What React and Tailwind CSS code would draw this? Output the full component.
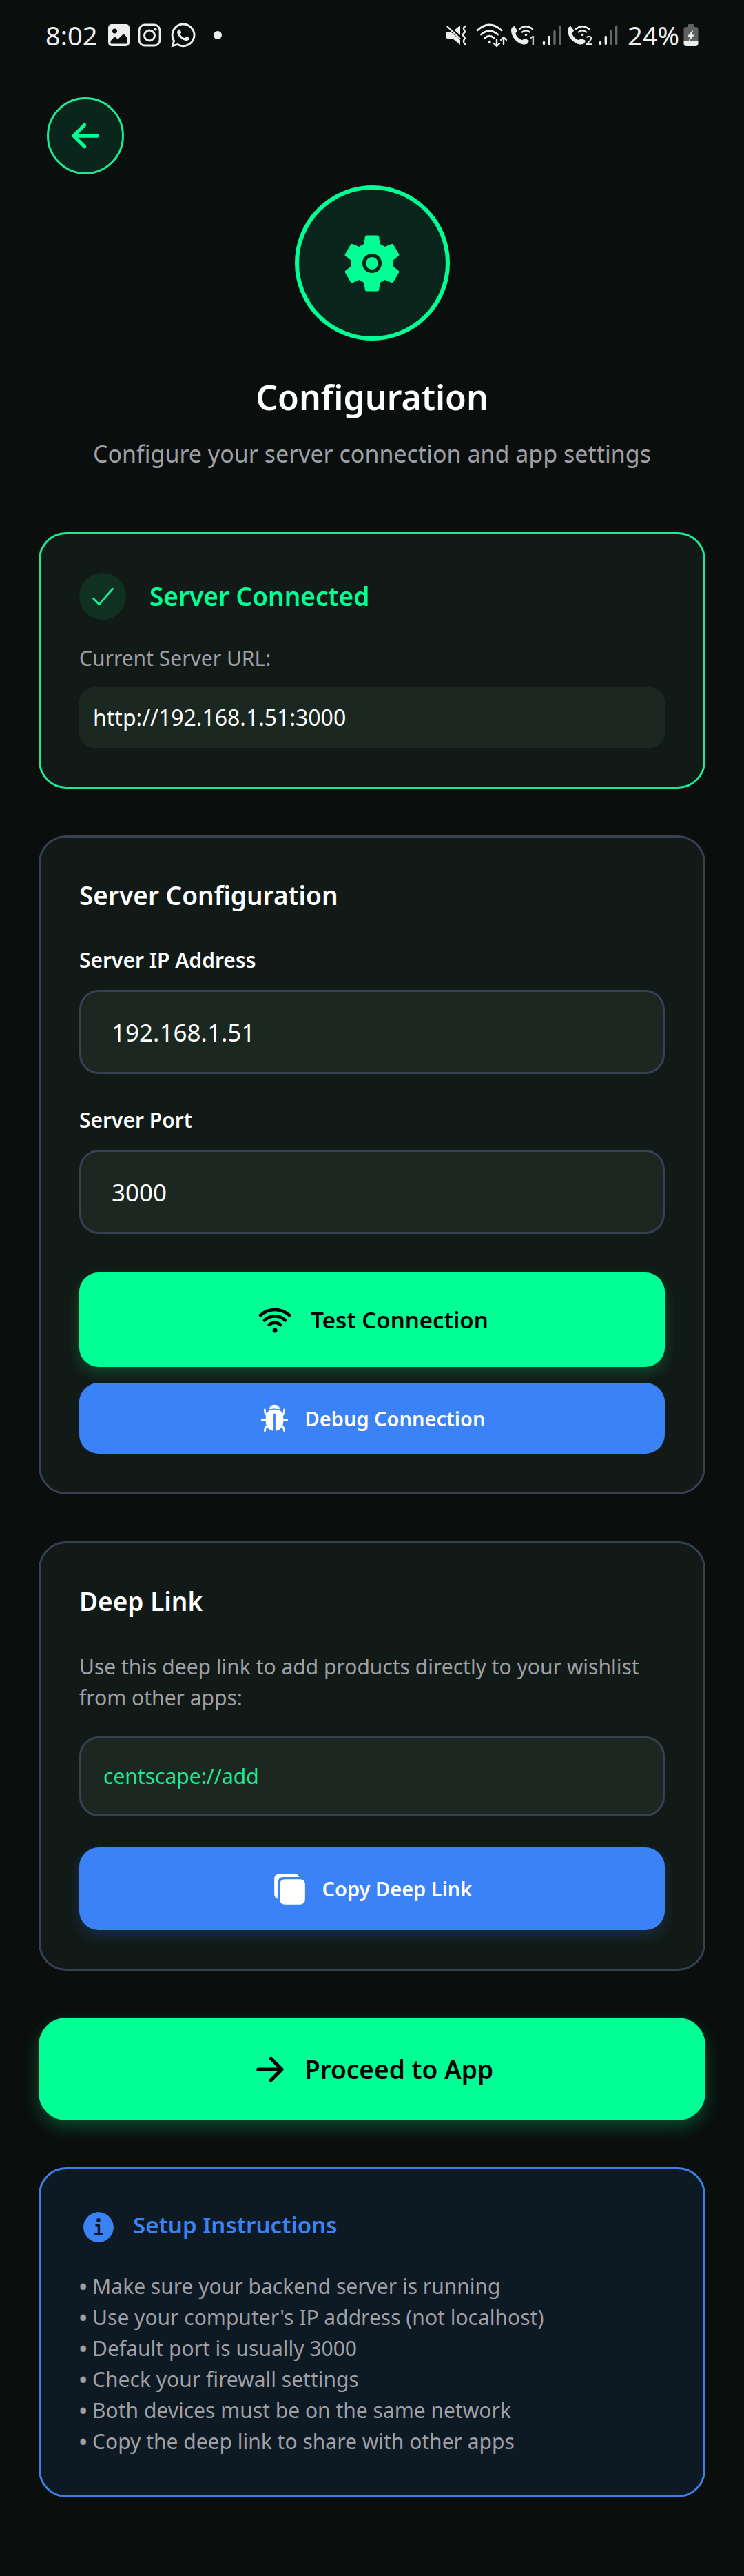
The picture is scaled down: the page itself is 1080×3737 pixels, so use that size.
import React, { useState } from "react";
import {
  IoArrowBack,
  IoArrowForward,
  IoBug,
  IoCheckmark,
  IoCopy,
  IoInformationCircle,
  IoSettingsSharp,
  IoWifi,
} from "react-icons/io5";
import { FaWhatsapp } from "react-icons/fa";

const INSTRUCTIONS = [
  "Make sure your backend server is running",
  "Use your computer's IP address (not localhost)",
  "Default port is usually 3000",
  "Check your firewall settings",
  "Both devices must be on the same network",
  "Copy the deep link to share with other apps",
];

function GalleryIcon() {
  return (
    <svg viewBox="0 0 31 32" className="h-8 w-[31px]" aria-hidden="true">
      <path
        fillRule="evenodd"
        fill="currentColor"
        d="M5 0h21a5 5 0 0 1 5 5v22a5 5 0 0 1-5 5H5a5 5 0 0 1-5-5V5a5 5 0 0 1 5-5ZM9.500 6.500a3.500 3.500 0 1 0 0 7a3.500 3.500 0 1 0 0-7ZM3.500 24.500v2.500c0 1 .6 1.500 1.500 1.500h21c1 0 1.500-.6 1.500-1.500v-7.500L22.500 14 14 22l-4.500-4Z"
      />
    </svg>
  );
}

function InstagramIcon() {
  return (
    <svg viewBox="0 0 34 34" className="size-[34px]" fill="none" stroke="currentColor" strokeWidth="2.800" aria-hidden="true">
      <rect x="2" y="2" width="30" height="30" rx="8" />
      <circle cx="17" cy="17.500" r="7.500" strokeWidth="3" />
      <circle cx="25.500" cy="8.500" r="2" fill="currentColor" stroke="none" />
    </svg>
  );
}

function MuteVibrateIcon() {
  return (
    <svg viewBox="0 0 30 30" className="size-[30px]" aria-hidden="true">
      <path fill="currentColor" d="M2 10.500h5.500L21 22v7L10 20H3a2.500 2.500 0 0 1-2.500-2.500v-4.500A2.500 2.500 0 0 1 2 10.500ZM12.500 7.500 21 1v14Z" />
      <path d="M2.500 2.500 20.500 20" fill="none" stroke="currentColor" strokeWidth="2.400" strokeLinecap="round" />
      <path
        d="M28.500 2q-3 1.500-2.500 3.500t1.500 3.500t-1.500 3.500t0 4t1.500 3.500t-1.500 3.500q-.5 2.500 2.500 5"
        fill="none"
        stroke="currentColor"
        strokeWidth="2.400"
        strokeLinecap="round"
      />
    </svg>
  );
}

function WifiTrafficIcon() {
  return (
    <svg viewBox="0 0 46 36" className="h-9 w-[46px]" fill="none" stroke="currentColor" strokeLinecap="round" aria-hidden="true">
      <g strokeWidth="2.800">
        <path d="M2 11q17.500-16 35 0" />
        <path d="M7.500 17q12-10.500 24 0" />
        <path d="M13 22q6.500-5.500 13 0" />
      </g>
      <circle cx="19.500" cy="28" r="2.200" fill="currentColor" stroke="none" />
      <g strokeWidth="2.400" strokeLinejoin="round">
        <path d="M30 24v9.500M26 30l4 4 4-4" />
        <path d="M40 31v-9.500M36 25l4-4 4 4" />
      </g>
    </svg>
  );
}

function WifiCallIcon({ sim }) {
  return (
    <svg viewBox="0 -5 38 40" className="h-10 w-[38px]" aria-hidden="true">
      <path
        fill="currentColor"
        d="M1 7.500C1 4.500 3 2.500 5.500 2l4.500 6c.5 1-2.500 3.500-2.500 4.500 1 4.500 5 8 9 9.500 1.500.3 3.500-2.500 4.500-2l5.500 2.500c.5 3-2 6-6 6C10.500 28.500 1 18 1 7.500Z"
      />
      <g fill="none" stroke="currentColor" strokeWidth="2.400" strokeLinecap="round">
        <path d="M13 6q9.500-7.500 19 0" />
        <path d="M17 10.500q5.500-4.500 11 0" />
      </g>
      <circle cx="22.500" cy="14.500" r="1.800" fill="currentColor" />
      <text x="27" y="29" fontSize="18" fontWeight="500" fill="currentColor">
        {sim}
      </text>
    </svg>
  );
}

function SignalIcon() {
  return (
    <svg viewBox="0 0 28 30" className="h-[30px] w-7" stroke="currentColor" strokeWidth="3.400" strokeLinecap="round" aria-hidden="true">
      <path d="M2.500 25.500v2M10.300 17.500v10" />
      <path d="M18 9.500v18M25.700 2.500v25" opacity="0.4" />
    </svg>
  );
}

function BatteryIcon() {
  return (
    <svg viewBox="0 0 22 32" className="h-8 w-[22px]" aria-hidden="true">
      <path d="M6 4V2.500Q6 0 8.500 0h5Q16 0 16 2.500V4h2q3.500 0 3.500 3.500V25H.5V7.500Q.5 4 4 4Z" fill="#5f6161" />
      <path d="M.5 25h21v3q0 4-4 4h-13q-4 0-4-4Z" fill="currentColor" />
      <path d="M13 9.500 5.500 18h4.300L7.500 25 16.500 15.500h-4.700l2.500-6Z" fill="currentColor" />
    </svg>
  );
}

function StatusBar() {
  return (
    <header className="flex h-[102px] items-center justify-between px-[66px] text-[38px] leading-none text-[#eeeeee]">
      <div className="flex items-center">
        <span>8:02</span>
        <div className="ml-4 flex items-center gap-3">
          <GalleryIcon />
          <InstagramIcon />
          <FaWhatsapp className="size-10" aria-hidden="true" />
          <span className="ml-3 size-3 rounded-full bg-current" />
        </div>
      </div>
      <div className="flex items-center">
        <MuteVibrateIcon />
        <div className="ml-[14px] flex items-center gap-1">
          <WifiTrafficIcon />
          <WifiCallIcon sim="1" />
        </div>
        <div className="mr-[14px] ml-2 flex items-center gap-2">
          <SignalIcon />
          <WifiCallIcon sim="2" />
          <SignalIcon />
        </div>
        <span className="mr-[6px]">24%</span>
        <BatteryIcon />
      </div>
    </header>
  );
}

function GearIcon() {
  return (
    <span className="relative flex items-center justify-center">
      <IoSettingsSharp className="size-[90px]" />
      <span className="absolute size-[18px] rounded-full bg-current" />
    </span>
  );
}

function Card({ className, children }) {
  return <section className={`rounded-[40px] border-3 p-14 ${className}`}>{children}</section>;
}

function Field({ id, label, value, onChange }) {
  return (
    <div className="flex flex-col gap-[21px]">
      <label htmlFor={id} className="text-[30px] leading-11 font-semibold">
        {label}
      </label>
      <input
        id={id}
        value={value}
        onChange={(e) => onChange(e.target.value)}
        className="h-[122px] w-full rounded-[28px] border-3 border-[#374151] bg-[#1b2822] px-11 text-[35px] outline-none"
      />
    </div>
  );
}

export default function App() {
  const [ip, setIp] = useState("192.168.1.51");
  const [port, setPort] = useState("3000");

  return (
    <div className="min-h-screen bg-[#0a0e0d] font-['Noto_Sans',sans-serif] text-white">
      <StatusBar />

      <main className="px-14 pt-[39px] pb-28">
        <button
          type="button"
          aria-label="Back"
          className="ml-3 flex size-28 items-center justify-center rounded-full border-3 border-[#1fe893] bg-[#0a261c] text-[#00ff94]"
        >
          <IoArrowBack className="size-14" />
        </button>

        <div className="mt-4 flex flex-col items-center text-center">
          <div className="flex size-[225px] items-center justify-center rounded-full border-6 border-[#00ff94] bg-[#0a261c] text-[#00ff94]">
            <GearIcon />
          </div>
          <h1 className="mt-12 text-[50px] leading-[68px] font-semibold">Configuration</h1>
          <p className="mt-6 text-[34px] leading-12 text-[#9f9fa6]">
            Configure your server connection and app settings
          </p>
        </div>

        <div className="mt-[90px] flex flex-col gap-[68px]">
          <Card className="border-[#1fe893] bg-[#111a16]">
            <div className="flex items-center gap-[34px]">
              <span className="flex size-[68px] items-center justify-center rounded-full bg-[#103122] text-[#1fe893]">
                <IoCheckmark className="size-[45px]" />
              </span>
              <h2 className="text-[37px] leading-14 font-semibold text-[#00ff94]">Server Connected</h2>
            </div>
            <p className="mt-[33px] text-[30px] leading-[45px] text-[#9f9fa6]">Current Server URL:</p>
            <p className="mt-5 rounded-[22px] bg-[#1b2822] px-5 text-[32px] leading-[88px]">
              http://192.168.1.51:3000
            </p>
          </Card>

          <Card className="border-[#374151] bg-[#111a16]">
            <h2 className="text-[37px] leading-14 font-semibold">Server Configuration</h2>
            <div className="mt-11 flex flex-col gap-[45px]">
              <Field id="server-ip" label="Server IP Address" value={ip} onChange={setIp} />
              <Field id="server-port" label="Server Port" value={port} onChange={setPort} />
            </div>
            <button
              type="button"
              className="mt-14 flex h-[137px] w-full items-center justify-center gap-6 rounded-[28px] bg-[#00ff94] text-[33px] font-semibold text-black shadow-[0_8px_20px_rgba(0,255,148,0.2)]"
            >
              <IoWifi className="size-14" />
              Test Connection
            </button>
            <button
              type="button"
              className="mt-[23px] flex h-[103px] w-full items-center justify-center gap-[22px] rounded-[28px] bg-[#3b82f6] text-[29px] font-semibold"
            >
              <IoBug className="size-[45px]" />
              Debug Connection
            </button>
          </Card>

          <Card className="border-[#374151] bg-[#111a16]">
            <h2 className="text-[37px] leading-14 font-semibold">Deep Link</h2>
            <p className="mt-11 text-[30px] leading-[45px] text-[#9f9fa6]">
              Use this deep link to add products directly to your wishlist from other apps:
            </p>
            <p className="mt-[34px] rounded-[28px] border-3 border-[#374151] bg-[#1b2822] px-8 text-[30px] leading-[110px] text-[#1fe893]">
              centscape://add
            </p>
            <button
              type="button"
              className="mt-[45px] flex h-[120px] w-full items-center justify-center gap-[22px] rounded-[28px] bg-[#3b82f6] text-[29px] font-semibold shadow-[0_8px_20px_rgba(59,130,246,0.2)]"
            >
              <IoCopy className="size-[51px]" />
              Copy Deep Link
            </button>
          </Card>

          <button
            type="button"
            className="flex h-[149px] w-full items-center justify-center gap-[22px] rounded-[40px] bg-[#00ff94] text-[37px] font-semibold text-black shadow-[0_10px_24px_rgba(0,255,148,0.25)]"
          >
            <IoArrowForward className="size-14" />
            Proceed to App
          </button>

          <Card className="border-[#3f7fe4] bg-[#0e1a23]">
            <div className="flex items-start gap-[22px] text-[#3b82f6]">
              <IoInformationCircle className="size-14" />
              <h2 className="text-[33px] leading-[50px] font-semibold">Setup Instructions</h2>
            </div>
            <ul className="mt-[35px] text-[30px] leading-[45px] text-[#9f9fa6]">
              {INSTRUCTIONS.map((line) => (
                <li key={line}>
                  <span className="font-bold">•</span> {line}
                </li>
              ))}
            </ul>
          </Card>
        </div>
      </main>
    </div>
  );
}
